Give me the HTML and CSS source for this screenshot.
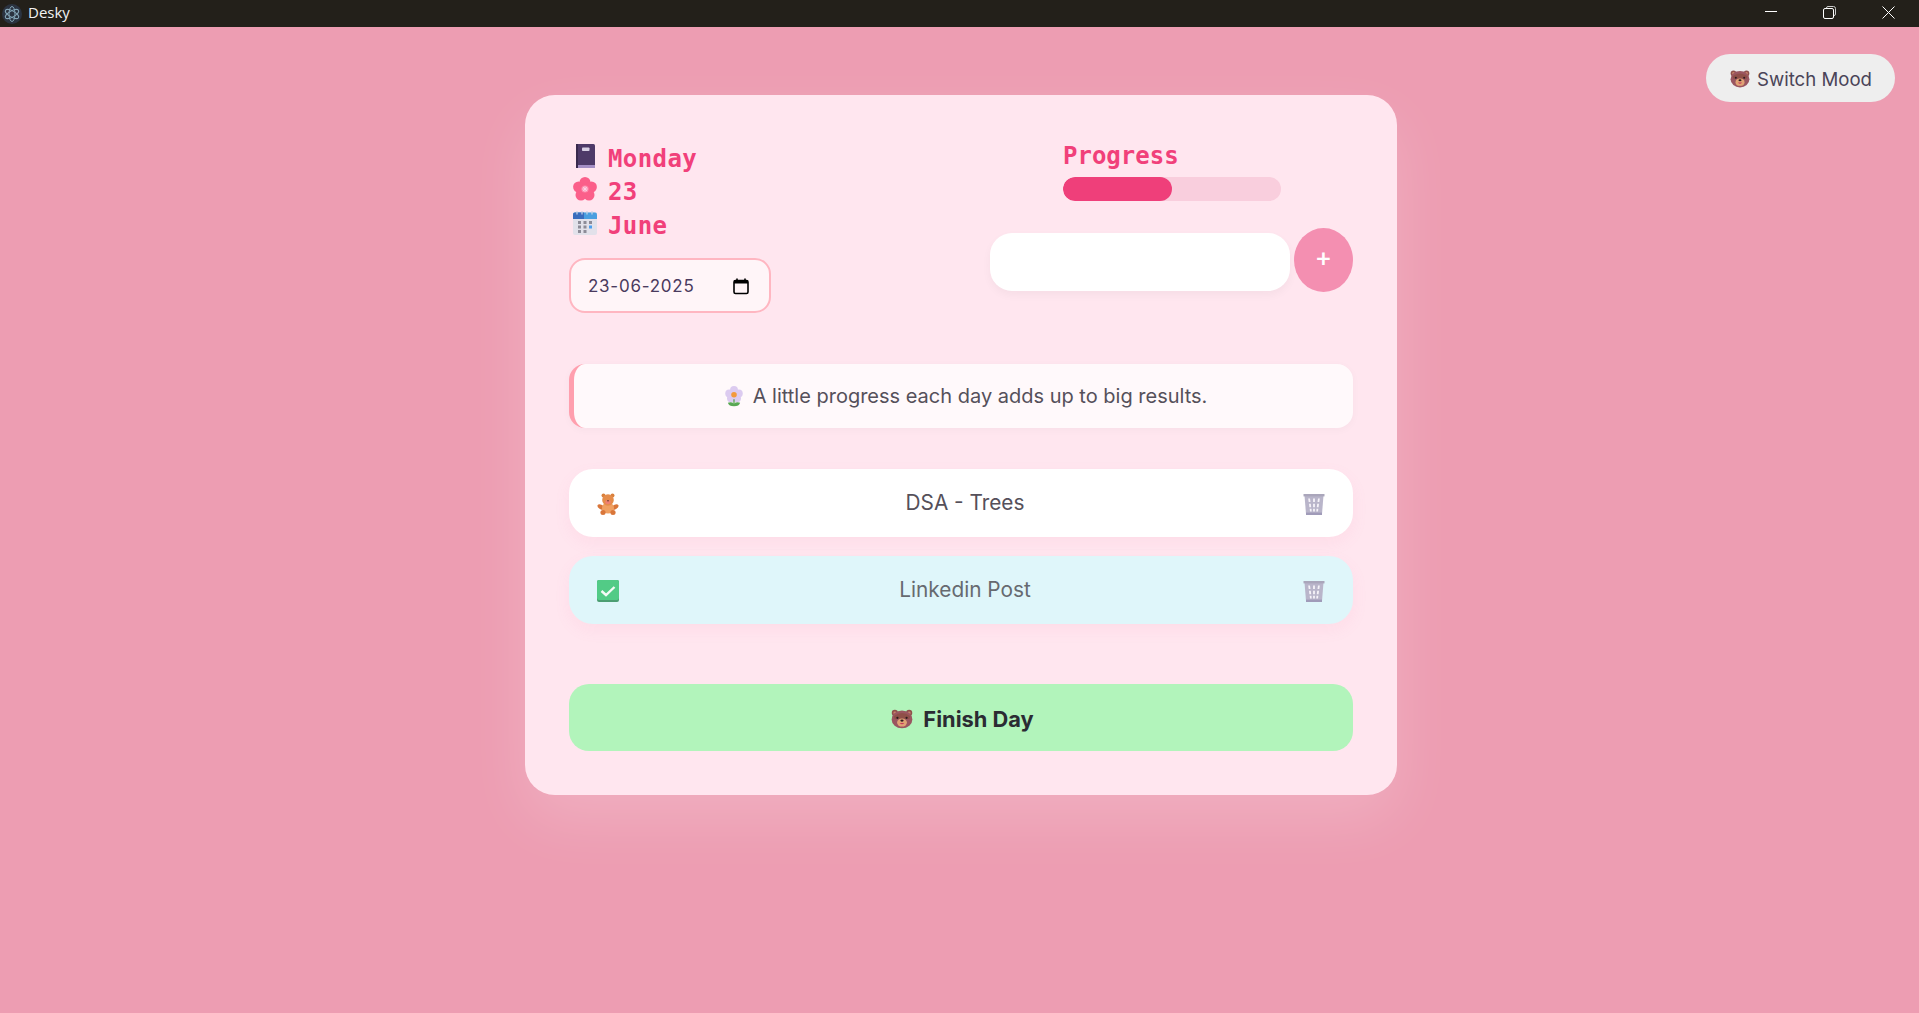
FILE: index.html
```html
<!DOCTYPE html>
<html lang="en">
<head>
<meta charset="utf-8">
<title>Desky</title>
<link rel="stylesheet" href="styles.css">
</head>
<body>
<svg class="defs" width="0" height="0" aria-hidden="true">
  <defs>
    <symbol id="bear" viewBox="0 0 24 24">
      <circle cx="4.200" cy="6.500" r="3.400" fill="#8f4f4b"/><circle cx="19.800" cy="6.500" r="3.400" fill="#8f4f4b"/>
      <circle cx="4.200" cy="6.500" r="1.600" fill="#c9866a"/><circle cx="19.800" cy="6.500" r="1.600" fill="#c9866a"/>
      <ellipse cx="12" cy="13.500" rx="11.300" ry="9.800" fill="#9a5660"/>
      <path d="M3 10q9-7 18 0l-1 3H4z" fill="#8f4f48"/>
      <ellipse cx="12" cy="17" rx="5.400" ry="4.400" fill="#e0a274"/>
      <circle cx="7" cy="11.800" r="1.200" fill="#2c1c20"/><circle cx="17" cy="11.800" r="1.200" fill="#2c1c20"/>
      <ellipse cx="12" cy="14.800" rx="1.800" ry="1.200" fill="#2c1c20"/>
      <path d="M9.500 17.400q2.500 3 5 0z" fill="#c8385e"/>
    </symbol>
    <symbol id="trash" viewBox="0 0 22 22">
      <path d="M1.500 2.500h19l-1.500 18.500H3z" fill="#b9b5ca"/>
      <path d="M.5 1h21v2.400H.5z" fill="#aaa6bb"/>
      <path d="M3 19.600h16V22H3z" fill="#a09bb9"/>
      <g fill="#f6f3f9"><path d="M5.200 5.500h1.800l.5 3.600H5.700zM10.100 5.500h1.800v3.600h-1.800zM15 5.500h1.800l-.5 3.600h-1.800zM6 10.800h1.800l.4 3.500H6.400zM10.100 10.800h1.800v3.500h-1.800zM14.200 10.800H16l-.4 3.500h-1.800zM6.700 15.700h1.800l.2 2.800H7zM10.100 15.700h1.800v2.800h-1.800zM13.500 15.700h1.800l-.3 2.800h-1.700z"/></g>
    </symbol>
  </defs>
</svg>
<header class="titlebar">
  <div class="title-left">
    <svg class="app-icon" viewBox="0 0 20 20" aria-hidden="true">
      <circle cx="10" cy="10" r="10" fill="#2b3340"/>
      <g fill="none" stroke="#84a5b6" stroke-width="1">
        <ellipse cx="10" cy="10" rx="7.500" ry="3" transform="rotate(30 10 10)"/>
        <ellipse cx="10" cy="10" rx="7.500" ry="3" transform="rotate(90 10 10)"/>
        <ellipse cx="10" cy="10" rx="7.500" ry="3" transform="rotate(150 10 10)"/>
      </g>
    </svg>
    <span class="app-name">Desky</span>
  </div>
  <div class="win-controls">
    <svg class="win-icon" viewBox="0 0 13 13" aria-hidden="true"><path d="M0 5.500h12" stroke="#fff" stroke-width="1" fill="none"/></svg>
    <svg class="win-icon" viewBox="0 0 13 13" aria-hidden="true"><path d="M3.500 2.500V2Q3.500 .5 5 .5h5.500q2 0 2 2V8q0 1.500-1.500 1.500h-.5" stroke="#ccc" stroke-width="1" fill="none"/><rect x=".5" y="2.500" width="10" height="10" rx="1.500" stroke="#fff" stroke-width="1" fill="none"/></svg>
    <svg class="win-icon" viewBox="0 0 13 13" aria-hidden="true"><path d="M.5.500l12 12M12.500.500l-12 12" stroke="#fff" stroke-width="1" fill="none"/></svg>
  </div>
</header>

<main class="stage">
  <button class="mood-btn"><svg class="emoji-20"><use href="#bear"/></svg><span class="btn-label">Switch Mood</span></button>

  <section class="card">
    <div class="top-row">
      <div class="date-col">
        <div class="date-line">
          <svg class="date-emoji" viewBox="0 0 24 24" aria-hidden="true"><rect x="3" y="0" width="19" height="24" rx="1.500" fill="#4e3a68"/><rect x="3" y="21" width="19" height="3" fill="#a48ec4"/><rect x="3" y="0" width="2" height="24" fill="#39294d"/><rect x="9" y="3.500" width="7.500" height="3.500" rx=".8" fill="#d8d0e4"/></svg>
          <span>Monday</span>
        </div>
        <div class="date-line">
          <svg class="date-emoji" viewBox="0 0 24 24" aria-hidden="true"><g fill="#fb5f8a"><circle cx="12" cy="5.500" r="5.500"/><circle cx="18.400" cy="10" r="5.500"/><circle cx="16" cy="18" r="5.500"/><circle cx="8" cy="18" r="5.500"/><circle cx="5.600" cy="10" r="5.500"/></g><circle cx="12" cy="12" r="3.600" fill="#fd8fb0"/><path d="M12 9.300v5.400M9.300 12h5.400M10.100 10.100l3.800 3.800M13.900 10.100l-3.800 3.800" stroke="#fbd3e6" stroke-width="1"/></svg>
          <span>23</span>
        </div>
        <div class="date-line">
          <svg class="date-emoji" viewBox="0 0 24 24" aria-hidden="true"><rect x="0" y="1" width="24" height="23" rx="2" fill="#e2e1ea"/><path d="M0 3.500q0-2 2-2h20q2 0 2 2v4.500H0z" fill="#4a9fe0"/><path d="M0 3.500q0-2 2-2h9v6.500H0z" fill="#3a6cbd"/><path d="M4 0v3.500M9 0v3.500M14 0v3.500M19 0v3.500" stroke="#c9d6e6" stroke-width="1.200"/><g fill="#8d8c98"><rect x="5" y="10" width="3" height="3"/><rect x="10.500" y="10" width="3" height="3"/><rect x="16" y="10" width="3" height="3"/><rect x="5" y="14.500" width="3" height="3"/><rect x="10.500" y="14.500" width="3" height="3"/><rect x="5" y="19" width="3" height="3"/><rect x="10.500" y="19" width="3" height="3"/></g><rect x="16" y="14.500" width="3" height="3" fill="#4ea0ee"/></svg>
          <span>June</span>
        </div>
        <div class="date-field">
          <span>23-06-2025</span>
          <svg class="cal-icon" viewBox="0 0 16 16" aria-hidden="true"><path d="M4 0v3M12 0v3" stroke="#000" stroke-width="1.600"/><rect x="1" y="2" width="14" height="13" rx="1.500" fill="none" stroke="#000" stroke-width="1.600"/><rect x="1" y="2" width="14" height="3" fill="#000"/></svg>
        </div>
      </div>
      <div class="progress-col">
        <div class="progress-head">
          <div class="progress-label">Progress</div>
          <div class="progress-track"><div class="progress-fill" style="width:50%"></div></div>
        </div>
        <div class="add-row">
          <input class="task-input" type="text" aria-label="New task">
          <button class="add-btn">+</button>
        </div>
      </div>
    </div>

    <div class="quote">
      <svg class="quote-emoji" viewBox="0 0 20 24" aria-hidden="true"><g fill="#dccbf0"><circle cx="10" cy="4.500" r="4.500"/><circle cx="15.500" cy="8.500" r="4.500"/><circle cx="13.500" cy="14" r="4.500"/><circle cx="6.500" cy="14" r="4.500"/><circle cx="4.500" cy="8.500" r="4.500"/></g><circle cx="10" cy="10" r="3.200" fill="#f39a3c"/><path d="M9.300 15h1.400v5H9.300z" fill="#4e9a4a"/><path d="M3 19q4-1.500 7 1 3-2.500 7-1-1 4-7 4t-7-4z" fill="#59a854"/></svg>
      <span>A little progress each day adds up to big results.</span>
    </div>

    <ul class="tasks">
      <li class="task">
        <svg class="task-icon" viewBox="0 0 22 22" aria-hidden="true"><circle cx="6.500" cy="2.500" r="2" fill="#d9803c"/><circle cx="15.500" cy="2.500" r="2" fill="#d9803c"/><ellipse cx="4" cy="14" rx="3.800" ry="2.200" transform="rotate(30 4 14)" fill="#d9763a"/><ellipse cx="18" cy="14" rx="3.800" ry="2.200" transform="rotate(-30 18 14)" fill="#d9763a"/><ellipse cx="11" cy="15" rx="6" ry="5.500" fill="#f0a062"/><circle cx="11" cy="7" r="5.800" fill="#e58c4a"/><ellipse cx="11" cy="9" rx="2.800" ry="2" fill="#ef7f70"/><circle cx="11" cy="7.800" r=".8" fill="#5a3325"/><ellipse cx="6" cy="19.500" rx="2.600" ry="2.500" fill="#d9763a"/><ellipse cx="16" cy="19.500" rx="2.600" ry="2.500" fill="#d9763a"/></svg>
        <span class="task-text">DSA - Trees</span>
        <svg class="task-icon"><use href="#trash"/></svg>
      </li>
      <li class="task task-done">
        <svg class="task-icon" viewBox="0 0 22 22" aria-hidden="true"><rect width="22" height="22" rx="2" fill="#4c9e72"/><rect width="22" height="20" rx="2" fill="#52cb86"/><path d="M4.500 11l4.500 4 8.500-8" fill="none" stroke="#f4fbf6" stroke-width="2.400"/></svg>
        <span class="task-text">Linkedin Post</span>
        <svg class="task-icon"><use href="#trash"/></svg>
      </li>
    </ul>

    <button class="finish-btn"><svg class="emoji-22"><use href="#bear"/></svg><span class="btn-label">Finish Day</span></button>
  </section>
</main>
</body>
</html>
```
FILE: styles.css
```css
* { box-sizing: border-box; }
html, body { height: 100%; }
body {
  margin: 0;
  display: flex;
  flex-direction: column;
  background: #ed9db2;
  font-family: "Inter", "Noto Sans", sans-serif;
  overflow: hidden;
}
.defs { position: absolute; }
.titlebar {
  flex: none;
  height: 27px;
  background: #23201a;
  display: flex;
  align-items: center;
  justify-content: space-between;
  color: #f2f2f2;
}
.title-left { display: flex; align-items: center; gap: 6px; padding: 0 0 3px 2px; }
.app-icon { width: 20px; height: 20px; margin-top: 3px; }
.app-name { font-family: "Open Sans", sans-serif; font-size: 15px; line-height: 20px; }
.win-controls { display: flex; gap: 45.500px; padding-right: 24.500px; margin-bottom: 3px; }
.win-icon { width: 13px; height: 13px; }
.stage {
  flex: 1;
  position: relative;
  display: flex;
  justify-content: center;
  align-items: flex-start;
  padding-top: 68px;
  padding-left: 3px;
}
.mood-btn {
  position: absolute;
  top: 27px;
  right: 24px;
  width: 189px;
  height: 48px;
  border: 0;
  border-radius: 24px;
  background: #eeeeee;
  color: #4a4458;
  font: 400 18.600px "Inter", sans-serif;
  display: flex;
  align-items: center;
  justify-content: center;
  gap: 7px;
  padding: 0 0 0 1px;
}
.btn-label { padding-top: 2px; }
.emoji-20 { width: 20px; height: 20px; }
.emoji-22 { width: 22px; height: 22px; }
.card {
  width: 872px;
  height: 700px;
  padding: 44px;
  background: #ffe6ef;
  border-radius: 30px;
  box-shadow: 0 25px 60px rgba(255, 255, 255, 0.18);
  display: flex;
  flex-direction: column;
}
.top-row { display: flex; justify-content: space-between; height: 181px; }
.date-col { display: flex; flex-direction: column; width: 202px; }
.date-line {
  display: flex;
  align-items: center;
  gap: 11px;
  height: 33.500px;
  padding-left: 4px;
  color: #f1407a;
  font: 700 24px "DejaVu Sans Mono", monospace;
  letter-spacing: 0.400px;
}
.date-line span { padding-top: 6px; }
.date-emoji { width: 24px; height: 24px; flex: none; }
.date-field {
  margin-top: 18px;
  height: 55px;
  border: 2px solid #ffb6c1;
  border-radius: 16px;
  background: #fff5f8;
  color: #4a3a5e;
  font-size: 17px;
  letter-spacing: 0.750px;
  display: flex;
  align-items: center;
  justify-content: space-between;
  padding: 2px 20px 0 17px;
}
.cal-icon { width: 16px; height: 17px; }
.progress-col { width: 363px; display: flex; flex-direction: column; align-items: flex-end; }
.progress-head { width: 363px; padding-left: 73px; }
.progress-label { color: #f1407a; font: 700 24px/34px "DejaVu Sans Mono", monospace; height: 38px; }
.progress-track { width: 218px; height: 24px; background: #f9cedd; border-radius: 12px; overflow: hidden; }
.progress-fill { height: 100%; background: #ef3f7a; border-radius: 12px; }
.add-row { display: flex; align-items: flex-start; gap: 4px; margin-top: 27px; width: 363px; }
.task-input {
  width: 300px;
  height: 58px;
  margin-top: 5px;
  border: 0;
  border-radius: 22px;
  background: #fff;
  box-shadow: 0 4px 10px rgba(0, 0, 0, 0.04);
}
.add-btn {
  width: 59px;
  height: 64px;
  border: 0;
  border-radius: 50%;
  background: #f48fb1;
  color: #fff;
  font: 500 26px "Inter", sans-serif;
  padding: 0 0 7px;
}
.quote {
  margin-top: 44px;
  height: 64px;
  background: #fff9fb;
  border-left: 5px solid #ff9fae;
  border-radius: 16px;
  box-shadow: 0 2px 8px rgba(0, 0, 0, 0.03);
  color: #55505a;
  font-size: 20px;
  display: flex;
  align-items: center;
  justify-content: center;
  gap: 10px;
  padding-left: 5px;
}
.quote-emoji { width: 18px; height: 21px; }
.tasks { list-style: none; margin: 41px 0 0; padding: 0; display: flex; flex-direction: column; gap: 19px; }
.task {
  height: 68px;
  border-radius: 24px;
  background: #fff;
  box-shadow: 0 6px 16px rgba(240, 120, 160, 0.08);
  display: flex;
  align-items: center;
  padding: 0 28px;
  color: #55505a;
  font-size: 20.800px;
}
.task-done { background: #dff6fa; color: #666a70; }
.task-text { flex: 1; text-align: center; padding: 0 0 2px 8px; }
.task-icon { width: 22px; height: 22px; flex: none; margin-top: 1px; }
.finish-btn {
  margin-top: 60px;
  width: 100%;
  height: 67px;
  border: 0;
  border-radius: 20px;
  background: #b2f4bb;
  color: #2b2b33;
  font: 700 21.800px "Inter", sans-serif;
  display: flex;
  align-items: center;
  justify-content: center;
  gap: 10px;
  padding: 0 0 0 3px;
}
```
